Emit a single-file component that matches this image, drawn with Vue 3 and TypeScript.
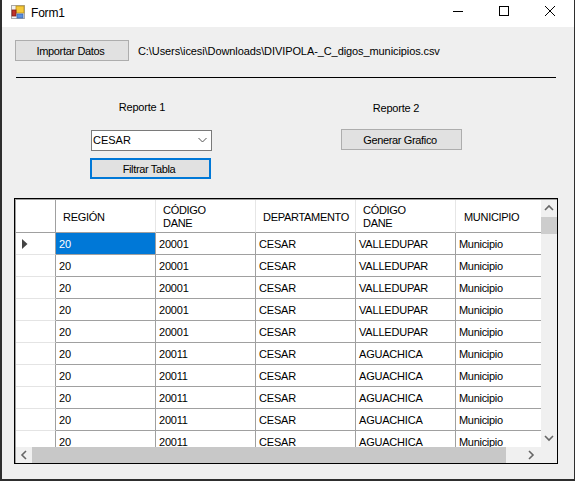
<template>
  <div class="desktop">
    <div class="window">
      <header class="titlebar">
        <svg class="app-icon" width="16" height="16" viewBox="0 0 16 16">
          <rect x="1.5" y="1.5" width="13" height="13" fill="#f2f2f2" stroke="#a8a8a8" />
          <rect x="6" y="2" width="8" height="7" fill="#f6c93a" stroke="#b98f1c" stroke-width="0.8" />
          <rect x="2" y="6" width="4" height="6" fill="#c0312b" stroke="#7c1c18" stroke-width="0.8" />
          <rect x="7" y="10" width="6" height="4" fill="#5a8fe0" stroke="#3a66b0" stroke-width="0.8" />
        </svg>
        <span class="title">Form1</span>
        <div class="controls">
          <svg width="46" height="22" viewBox="0 0 46 22"><path d="M18 11.5h10" stroke="#000" fill="none" /></svg>
          <svg width="46" height="22" viewBox="0 0 46 22"><rect x="18.5" y="6.5" width="9" height="9" stroke="#000" fill="none" /></svg>
          <svg width="46" height="22" viewBox="0 0 46 22"><path d="M18 6l10 10M28 6L18 16" stroke="#000" fill="none" /></svg>
        </div>
      </header>

      <main class="form">
        <div class="import-row">
          <button class="btn import-btn">Importar Datos</button>
          <span class="path">{{ filePath }}</span>
        </div>
        <hr class="divider" />

        <div class="reports">
          <section class="report report-one">
            <div class="report-label">Reporte 1</div>
            <div class="combo">
              <span>CESAR</span>
              <svg width="9" height="6" viewBox="0 0 9 6"><path d="M.5 1l4 4 4-4" stroke="#555" fill="none" /></svg>
            </div>
            <button class="btn filter-btn">Filtrar Tabla</button>
          </section>
          <section class="report report-two">
            <div class="report-label">Reporte 2</div>
            <button class="btn">Generar Grafico</button>
          </section>
        </div>

        <div class="grid-box">
          <div class="grid-view">
            <table class="grid">
              <thead>
                <tr>
                  <th class="row-head"></th>
                  <th v-for="(col, i) in columns" :key="i">{{ col }}</th>
                </tr>
              </thead>
              <tbody>
                <tr v-for="(row, i) in rows" :key="i">
                  <td class="row-head">
                    <svg v-if="i === 0" width="6" height="10" viewBox="0 0 6 10"><path d="M0 0l5.5 5L0 10z" fill="#444" /></svg>
                  </td>
                  <td :class="{ selected: i === 0 }">20</td>
                  <td>{{ row.code }}</td>
                  <td>CESAR</td>
                  <td>{{ row.city }}</td>
                  <td class="small">Municipio</td>
                </tr>
              </tbody>
            </table>
            <div class="vscroll">
              <svg width="16" height="17" viewBox="0 0 16 17"><path d="M4 10l4-4 4 4" stroke="#666" stroke-width="1.6" fill="none" /></svg>
              <div class="vtrack"><div class="vthumb"></div></div>
              <svg width="16" height="17" viewBox="0 0 16 17"><path d="M4 6l4 4 4-4" stroke="#666" stroke-width="1.6" fill="none" /></svg>
            </div>
          </div>
          <div class="hscroll">
            <svg width="16" height="16" viewBox="0 0 16 16"><path d="M10 4L6 8l4 4" stroke="#666" stroke-width="1.6" fill="none" /></svg>
            <div class="hthumb"></div>
            <svg width="16" height="16" viewBox="0 0 16 16"><path d="M6 4l4 4-4 4" stroke="#666" stroke-width="1.6" fill="none" /></svg>
          </div>
        </div>
      </main>
    </div>
  </div>
</template>

<script setup lang="ts">
interface GridRow {
  code: string
  city: string
}

const filePath = 'C:\\Users\\icesi\\Downloads\\DIVIPOLA-_C_digos_municipios.csv'

const columns = ['REGIÓN', 'CÓDIGO\nDANE', 'DEPARTAMENTO', 'CÓDIGO\nDANE', 'MUNICIPIO']

const rows: GridRow[] = [
  ...Array.from({ length: 5 }, () => ({ code: '20001', city: 'VALLEDUPAR' })),
  ...Array.from({ length: 5 }, () => ({ code: '20011', city: 'AGUACHICA' }))
]
</script>

<style>
html,
body {
  margin: 0;
  background: #2e2e2e;
  overflow: hidden;
}
</style>

<style scoped>
.desktop {
  width: 575px;
  height: 481px;
  padding-left: 2px;
  box-sizing: border-box;
  background: #2e2e2e;
  font-family: "Liberation Sans", Arial, sans-serif;
  font-size: 11px;
  color: #000;
}

.window {
  width: 572px;
  height: 479px;
  display: flex;
  flex-direction: column;
  background: #efefef;
}

.titlebar {
  height: 27px;
  flex: none;
  display: flex;
  align-items: center;
  background: #fff;
  padding-left: 8px;
}

.app-icon {
  margin-top: -3px;
}

.title {
  margin-left: 5px;
  margin-top: -2px;
  font-size: 12px;
  letter-spacing: -0.2px;
}

.controls {
  margin-left: auto;
  display: flex;
  margin-top: -5px;
  margin-right: 1px;
}

.form {
  flex: 1;
  display: flex;
  flex-direction: column;
  padding: 13px 0 0 12px;
}

.import-row {
  display: flex;
  align-items: center;
  height: 21px;
}

.btn {
  width: 121px;
  height: 21px;
  padding: 0 3px 0 0;
  border: 1px solid #adadad;
  background: #e1e1e1;
  font: inherit;
  letter-spacing: -0.35px;
  color: #000;
  display: block;
}

.import-btn {
  width: 114px;
  margin-left: 1px;
}

.path {
  margin-left: 9px;
  white-space: nowrap;
  letter-spacing: -0.09px;
}

.divider {
  width: 540px;
  height: 1px;
  margin: 16px 0 0 2px;
  border: 0;
  background: #000;
}

.reports {
  display: flex;
  padding-left: 76px;
  margin-top: 21px;
  height: 99px;
}

.report {
  width: 123px;
  display: flex;
  flex-direction: column;
}

.report-two {
  margin-left: 128px;
  padding-top: 1px;
}

.report-label {
  height: 16px;
  line-height: 16px;
  text-align: center;
  margin-bottom: 15px;
  margin-right: 19px;
  letter-spacing: -0.2px;
}

.report-two .report-label {
  margin-right: 13px;
  margin-bottom: 13px;
}

.combo {
  width: 121px;
  height: 21px;
  box-sizing: border-box;
  margin-left: 1px;
  border: 1px solid #7a7a7a;
  background: #fff;
  display: flex;
  align-items: center;
  justify-content: space-between;
  padding: 0 4px 1px 1px;
}

.filter-btn {
  margin-top: 7px;
  border: 2px solid #0078d7;
}

.grid-box {
  width: 544px;
  height: 266px;
  box-sizing: border-box;
  border: 1px solid #000;
  padding: 1px 0 0 1px;
  box-shadow: inset 1px 1px 0 #a0a0a0;
  display: flex;
  flex-direction: column;
  background: #f0f0f0;
}

.grid-view {
  flex: 1;
  display: flex;
  min-height: 0;
  overflow: hidden;
}

.grid {
  width: 525px;
  flex: none;
  table-layout: fixed;
  border-collapse: separate;
  border-spacing: 0;
  background: #fff;
  align-self: flex-start;
}

.grid th,
.grid td {
  box-sizing: border-box;
  width: 100px;
  height: 22px;
  padding: 0 0 0 3px;
  border-right: 1px solid #a0a0a0;
  border-bottom: 1px solid #a0a0a0;
  font-weight: 400;
  text-align: left;
  white-space: nowrap;
  overflow: hidden;
  letter-spacing: -0.2px;
}

.grid th {
  height: 33px;
  padding: 2px 0 0 7px;
  line-height: 13px;
  white-space: pre-line;
  border-right-color: #e6e6e6;
  letter-spacing: -0.3px;
}

.grid th:last-child,
.grid td:last-child {
  width: 85px;
  border-right: 0;
}

.grid th:last-child {
  padding-left: 8px;
}

.grid .row-head {
  width: 40px;
  border-bottom-color: #e4e4e4;
  border-right-color: #a0a0a0;
}

.grid thead .row-head {
  border-bottom-color: #a0a0a0;
}

.grid .row-head svg {
  display: block;
  margin-left: 3px;
}

.grid .selected {
  background: #0078d7;
  color: #fff;
}

.grid .small {
  letter-spacing: -0.3px;
}

.vscroll {
  width: 17px;
  display: flex;
  flex-direction: column;
  background: #f0f0f0;
}

.vscroll svg {
  flex: none;
}

.vtrack {
  flex: 1;
}

.vthumb {
  height: 17px;
  background: #cdcdcd;
}

.hscroll {
  height: 16px;
  flex: none;
  display: flex;
  align-items: center;
  background: #f0f0f0;
}

.hthumb {
  width: 474px;
  height: 16px;
  background: #c8c8c8;
  margin-right: 17px;
}
</style>
